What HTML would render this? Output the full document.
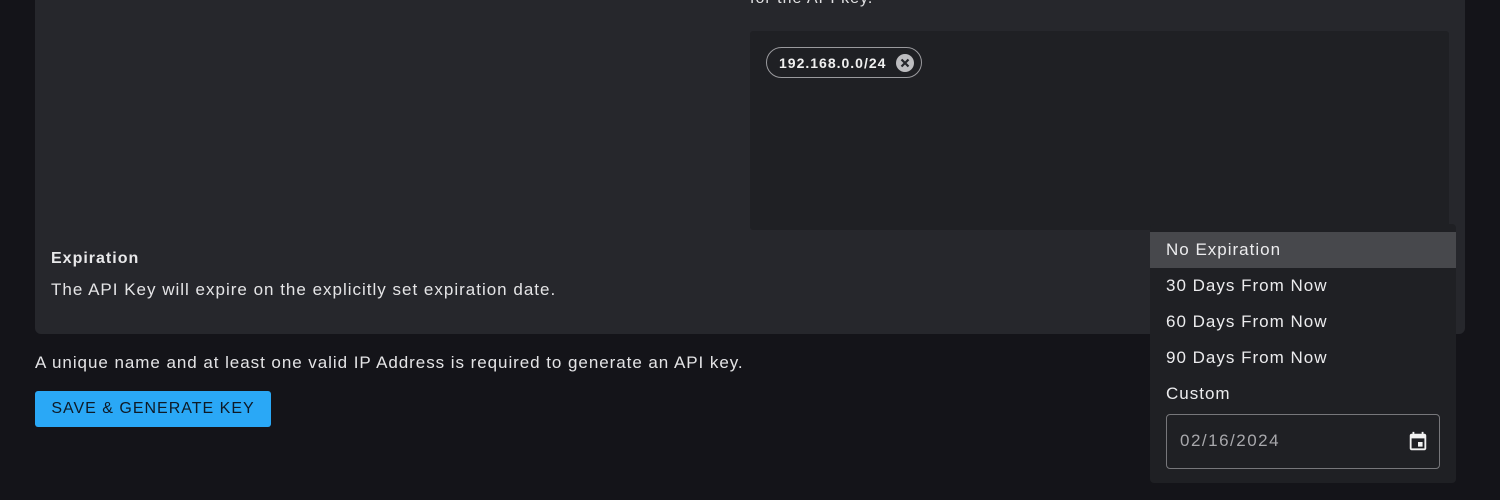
<!DOCTYPE html>
<html><head><style>
body{margin:0;width:1500px;height:500px;background:#141419;font-family:"Liberation Sans",sans-serif;color:#e8e8ea;position:relative;overflow:hidden}
.abs{position:absolute}
.panel{left:35px;top:-10px;width:1430px;height:344px;background:#26272c;border-radius:6px}
.ta{left:750px;top:31px;width:699px;height:199px;background:#1f2024;border-radius:3px}
.chip{left:766px;top:47px;width:156px;height:31px;border:1px solid #9a9a9e;border-radius:16px;box-sizing:border-box}
.chip span{position:absolute;left:12px;top:7px;font-size:14px;font-weight:bold;color:#f0f0f0;letter-spacing:1px}
.x{position:absolute;left:129px;top:6px;width:18px;height:18px;border-radius:50%;background:#bdbdc0}
.dd{left:1150px;top:224px;width:306px;height:259px;background:#1f2024;border-radius:4px}
.item{position:absolute;left:0;width:306px;height:36px;font-size:17px;line-height:36px;padding-left:16px;box-sizing:border-box;color:#ececee;letter-spacing:1px}
.inp{left:1166px;top:414px;width:274px;height:55px;border:1px solid #77777b;border-radius:4px;box-sizing:border-box}
</style></head><body>
<div class="abs panel"></div>
<div class="abs" style="left:750px;top:-10px;font-size:16px;color:#e0e0e2;letter-spacing:1px">for the API key.</div>
<div class="abs ta"></div>
<div class="abs chip"><span>192.168.0.0/24</span><div class="x"><svg width="18" height="18"><path d="M5.5 5.5L12.5 12.5M12.5 5.5L5.5 12.5" stroke="#26272c" stroke-width="2.2"/></svg></div></div>
<div class="abs" style="left:51px;top:250px;font-size:16px;font-weight:bold;letter-spacing:1px">Expiration</div>
<div class="abs" style="left:51px;top:280px;font-size:17px;color:#e4e4e6;letter-spacing:1px">The API Key will expire on the explicitly set expiration date.</div>
<div class="abs" style="left:35px;top:353px;font-size:17px;color:#e4e4e6;letter-spacing:0.95px">A unique name and at least one valid IP Address is required to generate an API key.</div>
<div class="abs" style="left:35px;top:391px;width:236px;height:36px;background:#2aa8f6;border-radius:3px;color:#0e1a26;font-size:16px;line-height:36px;text-align:center;letter-spacing:1px">SAVE &amp; GENERATE KEY</div>
<div class="abs dd">
<div class="item" style="top:8px;background:#47484c">No Expiration</div>
<div class="item" style="top:44px">30 Days From Now</div>
<div class="item" style="top:80px">60 Days From Now</div>
<div class="item" style="top:116px">90 Days From Now</div>
<div class="item" style="top:152px">Custom</div>
</div>
<div class="abs inp"><span style="position:absolute;left:13px;top:16px;font-size:17px;color:#a8a8ac;letter-spacing:1.5px">02/16/2024</span>
<svg style="position:absolute;left:240px;top:16px" width="22" height="22" viewBox="0 0 24 24"><path fill="#f2f2f2" d="M17 12h-5v5h5v-5zM16 1v2H8V1H6v2H5c-1.1 0-2 .9-2 2v14c0 1.1.9 2 2 2h14c1.1 0 2-.9 2-2V5c0-1.1-.9-2-2-2h-1V1h-2zm3 18H5V8h14v11z"/></svg></div>
</body></html>
